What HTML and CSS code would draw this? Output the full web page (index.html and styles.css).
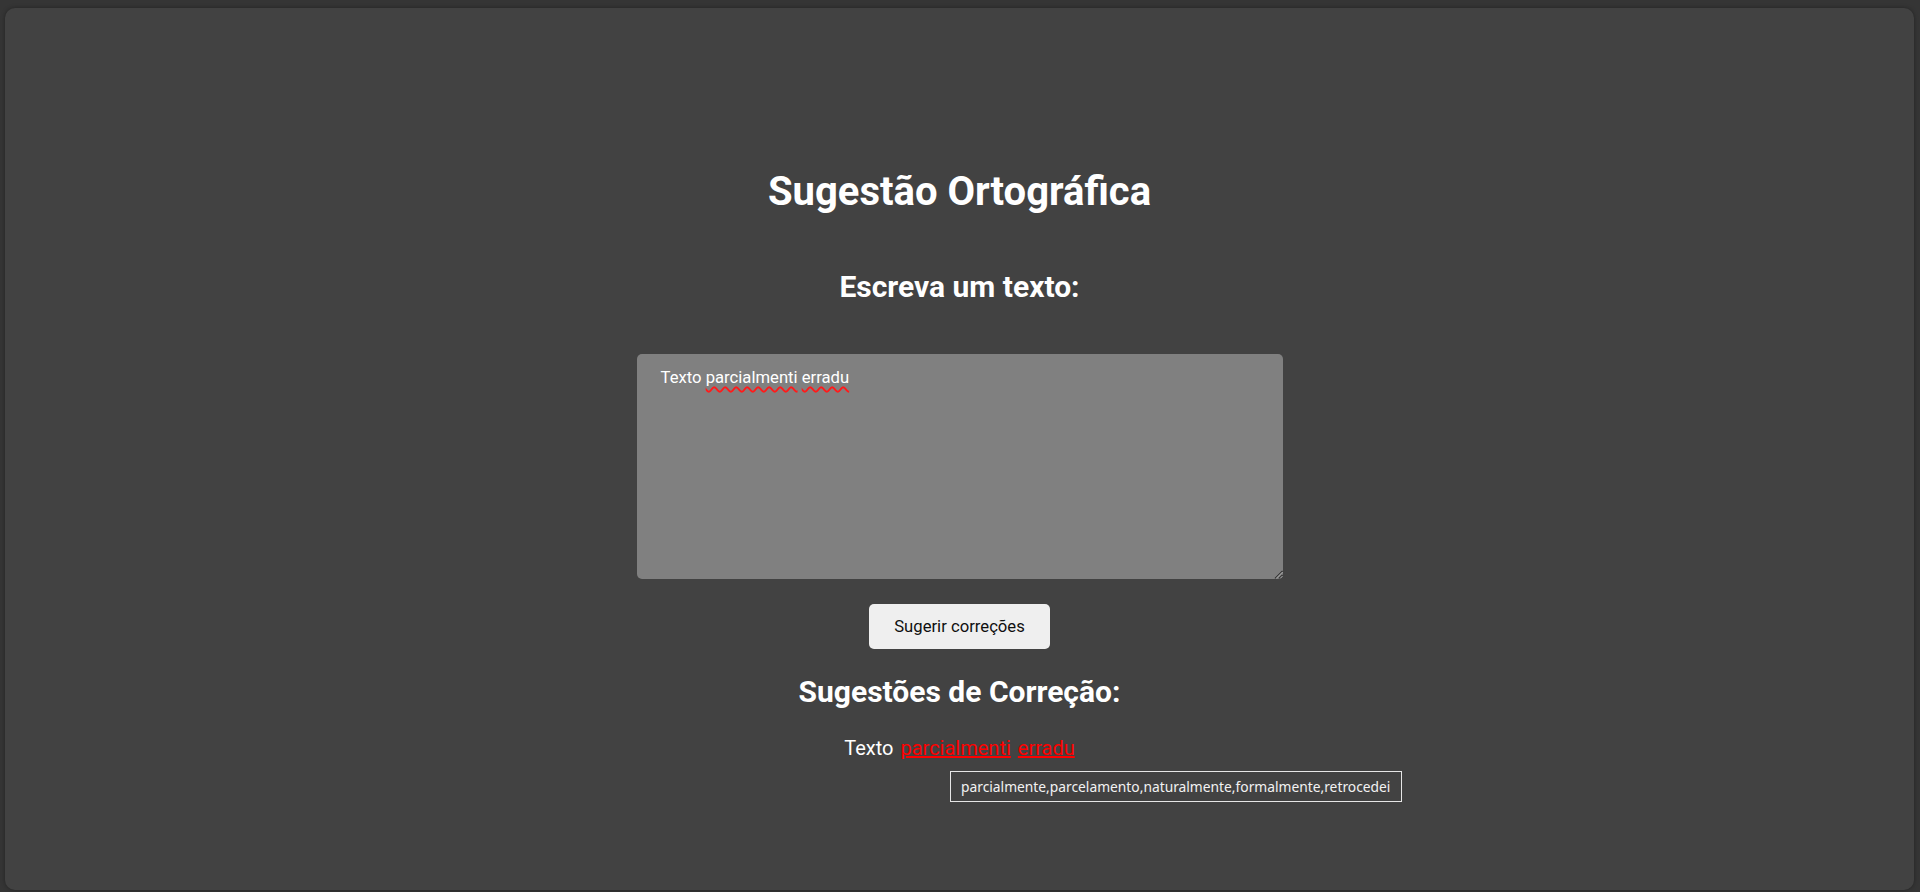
FILE: index.html
```html
<!DOCTYPE html>
<html lang="pt-BR">
<head>
<meta charset="utf-8">
<title>Sugestão Ortográfica</title>
<link rel="stylesheet" href="styles.css">
</head>
<body>
<div class="card">
  <main class="app">
    <h1 class="title">Sugestão Ortográfica</h1>
    <h2 class="subtitle">Escreva um texto:</h2>
    <div class="editor">
      <div class="editor-text">Texto <span class="misspelled">parcialmenti</span> <span class="misspelled">erradu</span></div>
      <svg class="grip" width="9" height="9" viewBox="0 0 9 9" aria-hidden="true">
        <line x1="1" y1="8.5" x2="8.5" y2="1" stroke="#2a2a2a" stroke-width="1.1"/>
        <line x1="5" y1="8.5" x2="8.5" y2="5" stroke="#2a2a2a" stroke-width="1.1"/>
        <line x1="2" y1="8.5" x2="8.5" y2="2" stroke="#d8d8d8" stroke-width="0.7"/>
        <line x1="6" y1="8.5" x2="8.5" y2="6" stroke="#d8d8d8" stroke-width="0.7"/>
      </svg>
    </div>
    <button class="btn" type="button">Sugerir correções</button>
    <h2 class="subtitle results-title">Sugestões de Correção:</h2>
    <p class="result">
      <span class="word">Texto</span>
      <a class="word wrong" href="#">parcialmenti</a>
      <a class="word wrong" href="#">erradu</a>
    </p>
    <div class="tooltip">parcialmente,parcelamento,naturalmente,formalmente,retrocedei</div>
  </main>
</div>
</body>
</html>
```

FILE: styles.css
```css
html, body {
  margin: 0;
  padding: 0;
}

body {
  background: #353535;
  font-family: Roboto, "Liberation Sans", sans-serif;
  color: #ffffff;
  overflow: hidden;
}

.card {
  margin: 8px 6px 2px 5px;
  height: calc(100vh - 10px);
  background: #424242;
  border-radius: 10px;
  box-shadow: 0 0 4px rgba(0, 0, 0, 0.35);
}

.app {
  position: relative;
  display: flex;
  flex-direction: column;
  align-items: center;
  padding-top: 162px;
}

.title {
  margin: 0;
  font-size: 40px;
  line-height: 44px;
  font-weight: 700;
  color: #ffffff;
}

.subtitle {
  margin: 57px 0 0;
  font-size: 30px;
  line-height: 32px;
  font-weight: 700;
  color: #ffffff;
}

.editor {
  position: relative;
  box-sizing: border-box;
  margin-top: 51px;
  width: 646px;
  height: 225px;
  padding: 14px 24px;
  background: #808080;
  border-radius: 5px;
  font-size: 16.67px;
  color: #ffffff;
  text-align: left;
}

.misspelled {
  text-decoration: underline wavy #ff1a1a;
  text-decoration-thickness: 1.5px;
  text-underline-offset: 3px;
}

.grip {
  position: absolute;
  right: 0;
  bottom: 0;
}

.btn {
  margin-top: 25px;
  height: 45px;
  padding: 0 25px;
  border: none;
  border-radius: 5px;
  background: #efefef;
  color: #101010;
  font-family: Roboto, "Liberation Sans", sans-serif;
  font-size: 16.67px;
}

.results-title {
  margin-top: 27px;
}

.result {
  margin: 27px 0 0;
  font-size: 20px;
  line-height: 26px;
  display: flex;
  gap: 7px;
}

.word {
  color: #ffffff;
}

.wrong {
  color: #ff0000;
  text-decoration: underline;
}

.tooltip {
  position: absolute;
  left: 945px;
  top: 763px;
  box-sizing: border-box;
  width: 452px;
  height: 31px;
  padding: 0 10px;
  border: 1px solid #e6e6e6;
  background: #424242;
  color: #f2f2f2;
  font-family: "Noto Sans", "Open Sans", sans-serif;
  font-size: 13.8px;
  line-height: 29px;
  white-space: nowrap;
}
```
